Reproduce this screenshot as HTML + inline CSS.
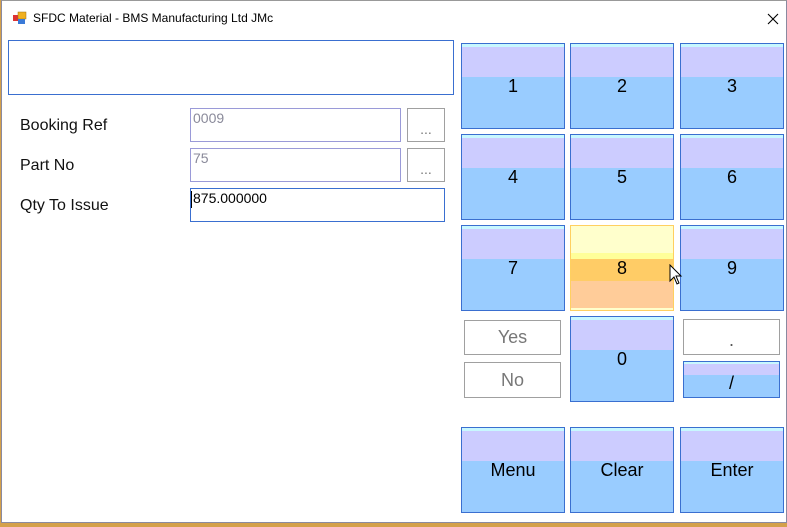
<!DOCTYPE html>
<html><head><style>
*{margin:0;padding:0;box-sizing:border-box}
body{width:787px;height:527px;overflow:hidden;background:#d4a04a;position:relative;font-family:"Liberation Sans",Arial,sans-serif}
.win{position:absolute;left:1px;top:0px;width:786px;height:523px;background:#fff;border:1px solid #8a8aa0;border-top:1px solid #999}
.a{position:absolute}
.k{position:absolute;border:1px solid #3a6fd0;background:linear-gradient(#c8f8ff 0,#c8f8ff 3px,#ccccff 3px,#ccccff 33px,#99ccff 33px);font-size:18px;color:#000;display:flex;align-items:center;justify-content:center}
.k span{position:relative;top:0}
.g{position:absolute;border:1px solid #a0a0a0;background:#fff;color:#777;font-size:18px;display:flex;align-items:center;justify-content:center}
.lbl{position:absolute;font-size:16px;color:#111}
.tb{position:absolute;border:1px solid #9a9ad8;color:#8a8a9a;font-size:14px;padding:1px 2px}
</style></head><body>
<div class="win">
<svg class="a" style="left:11px;top:10px" width="14" height="14"><rect x="0" y="4" width="6" height="6" fill="#d33"/><rect x="5" y="1" width="8" height="7" fill="#f0b020" stroke="#a07010" stroke-width="0.5"/><rect x="5" y="8" width="7" height="5" fill="#3a7ad8"/></svg>
<div class="a" style="left:31px;top:10px;font-size:12px;color:#000">SFDC Material - BMS Manufacturing Ltd JMc</div>
<svg class="a" style="left:765px;top:12px" width="12" height="12"><path d="M1 1L11 11M11 1L1 11" stroke="#000" stroke-width="1.1"/></svg>
<div class="a" style="left:6px;top:39px;width:446px;height:55px;border:1px solid #3a6fd0"></div>
<div class="lbl" style="left:18px;top:116px">Booking Ref</div>
<div class="lbl" style="left:18px;top:156px">Part No</div>
<div class="lbl" style="left:18px;top:196px">Qty To Issue</div>
<div class="tb" style="left:188px;top:107px;width:211px;height:34px">0009</div>
<div class="tb" style="left:188px;top:147px;width:211px;height:34px">75</div>
<div class="tb" style="left:188px;top:187px;width:255px;height:34px;border-color:#3a6fd0;color:#000">875.000000</div>
<div class="a" style="left:189px;top:190px;width:1px;height:17px;background:#000"></div>
<div class="g" style="left:405px;top:107px;width:38px;height:34px;font-size:14px"><span style="position:relative;top:4px">...</span></div>
<div class="g" style="left:405px;top:147px;width:38px;height:34px;font-size:14px"><span style="position:relative;top:4px">...</span></div>

<div class="k" style="left:459px;top:42px;width:104px;height:86px">1</div>
<div class="k" style="left:568px;top:42px;width:104px;height:86px">2</div>
<div class="k" style="left:678px;top:42px;width:104px;height:86px">3</div>
<div class="k" style="left:459px;top:133px;width:104px;height:86px">4</div>
<div class="k" style="left:568px;top:133px;width:104px;height:86px">5</div>
<div class="k" style="left:678px;top:133px;width:104px;height:86px">6</div>
<div class="k" style="left:459px;top:224px;width:104px;height:86px">7</div>
<div class="k" style="left:568px;top:224px;width:104px;height:86px;border-color:#ffd060;background:linear-gradient(#ffffcc 0,#ffffcc 27px,#ffff99 27px,#ffff99 33px,#ffcc66 33px,#ffcc66 55px,#ffcc99 55px,#ffcc99 82px,#ffffcc 82px)">8</div>
<div class="k" style="left:678px;top:224px;width:104px;height:86px">9</div>
<div class="g" style="left:462px;top:319px;width:97px;height:35px">Yes</div>
<div class="g" style="left:462px;top:361px;width:97px;height:36px">No</div>
<div class="k" style="left:568px;top:315px;width:104px;height:86px">0</div>
<div class="g" style="left:681px;top:318px;width:97px;height:36px;color:#555"><span style="position:relative;top:3px">.</span></div>
<div class="k" style="left:681px;top:360px;width:97px;height:37px;background:linear-gradient(#c8f8ff 0,#c8f8ff 2px,#ccccff 2px,#ccccff 13px,#99ccff 13px)"><span style="top:4px">/</span></div>
<div class="k" style="left:459px;top:426px;width:104px;height:86px">Menu</div>
<div class="k" style="left:568px;top:426px;width:104px;height:86px">Clear</div>
<div class="k" style="left:678px;top:426px;width:104px;height:86px">Enter</div>
<svg class="a" style="left:667px;top:263px" width="14" height="22"><path d="M1 1L1 17L5 13L8 20L10 19L7 12L12 12Z" fill="#fff" stroke="#000" stroke-width="1"/></svg>
</div>
</body></html>
